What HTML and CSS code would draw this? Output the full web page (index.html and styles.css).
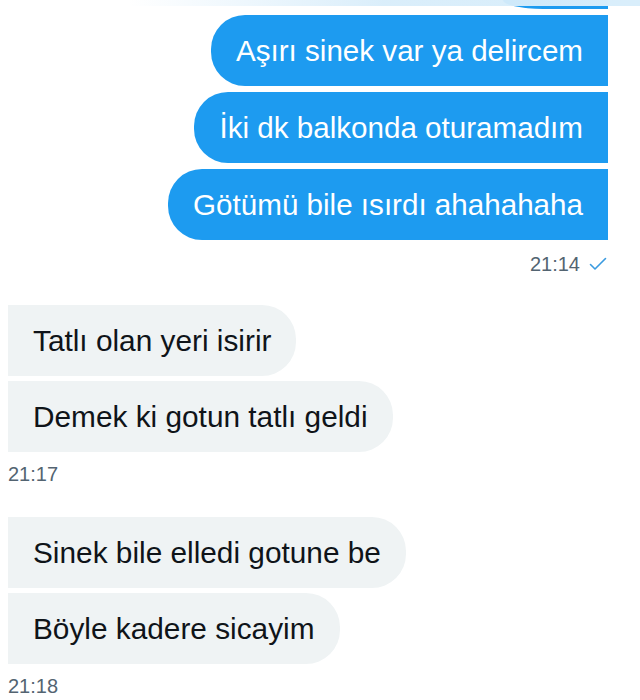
FILE: index.html
```html
<!DOCTYPE html>
<html lang="tr">
<head>
<meta charset="utf-8">
<link rel="stylesheet" href="styles.css">
</head>
<body>
<div class="chat">
  <div class="topfade"></div>
  <div class="sent">
    <div class="stub"></div>
    <div class="bubble out">Aşırı sinek var ya delircem</div>
    <div class="bubble out">İki dk balkonda oturamadım</div>
    <div class="bubble out">Götümü bile ısırdı ahahahaha</div>
    <div class="meta out-meta">21:14
      <svg class="check" viewBox="0 0 18 14" width="18" height="14"><path d="M1.5 7.5 L6 12 L16.5 1.5" fill="none" stroke="#3a9be0" stroke-width="1.6" stroke-linecap="round" stroke-linejoin="round"/></svg>
    </div>
  </div>
  <div class="recv first">
    <div class="bubble in">Tatlı olan yeri isirir</div>
    <div class="bubble in">Demek ki gotun tatlı geldi</div>
    <div class="meta">21:17</div>
  </div>
  <div class="recv second">
    <div class="bubble in">Sinek bile elledi gotune be</div>
    <div class="bubble in">Böyle kadere sicayim</div>
    <div class="meta">21:18</div>
  </div>
</div>
</body>
</html>
```
FILE: styles.css
```css
* { box-sizing: border-box; }
html, body { margin: 0; padding: 0; background: #ffffff; }
.chat {
  position: relative;
  width: 640px;
  height: 700px;
  overflow: hidden;
}
.topfade {
  position: absolute;
  left: 0; top: 0;
  width: 640px; height: 6px;
  background: linear-gradient(90deg, rgba(220,238,250,0) 20%, rgba(214,236,250,0.9) 60%, #d9eefb 100%);
}
.sent {
  display: flex;
  flex-direction: column;
  align-items: flex-end;
  gap: 6px;
  padding-right: 32px;
}
.stub {
  width: 105px;
  height: 9px;
  background: #1d9bf0;
  border-bottom-left-radius: 40px 9px;
}
.bubble {
  height: 71px;
  display: flex;
  align-items: center;
  padding: 0 25px;
  white-space: nowrap;
}
.out {
  background: #1d9bf0;
  color: #ffffff;
  border-radius: 34px 0 0 34px;
  font-family: "Liberation Sans", Arial, sans-serif;
  font-size: 29.6px;
}
.meta {
  font-family: "Liberation Sans", Arial, sans-serif;
  font-size: 20px;
  color: #536471;
  line-height: 24px;
  display: flex;
  align-items: center;
  gap: 9px;
}
.out-meta {
  margin-top: 6px;
  margin-right: 1px;
}
.check { display: block; }
.recv {
  display: flex;
  flex-direction: column;
  align-items: flex-start;
  gap: 5px;
  padding-left: 8px;
}
.recv.first { margin-top: 29px; }
.recv.second { margin-top: 31px; }
.recv .meta { margin-top: 5px; }
.in {
  background: #eff3f4;
  color: #0f1419;
  border-radius: 0 34px 34px 0;
  font-family: "Liberation Sans", Arial, sans-serif;
  font-size: 29.8px;
}
```
